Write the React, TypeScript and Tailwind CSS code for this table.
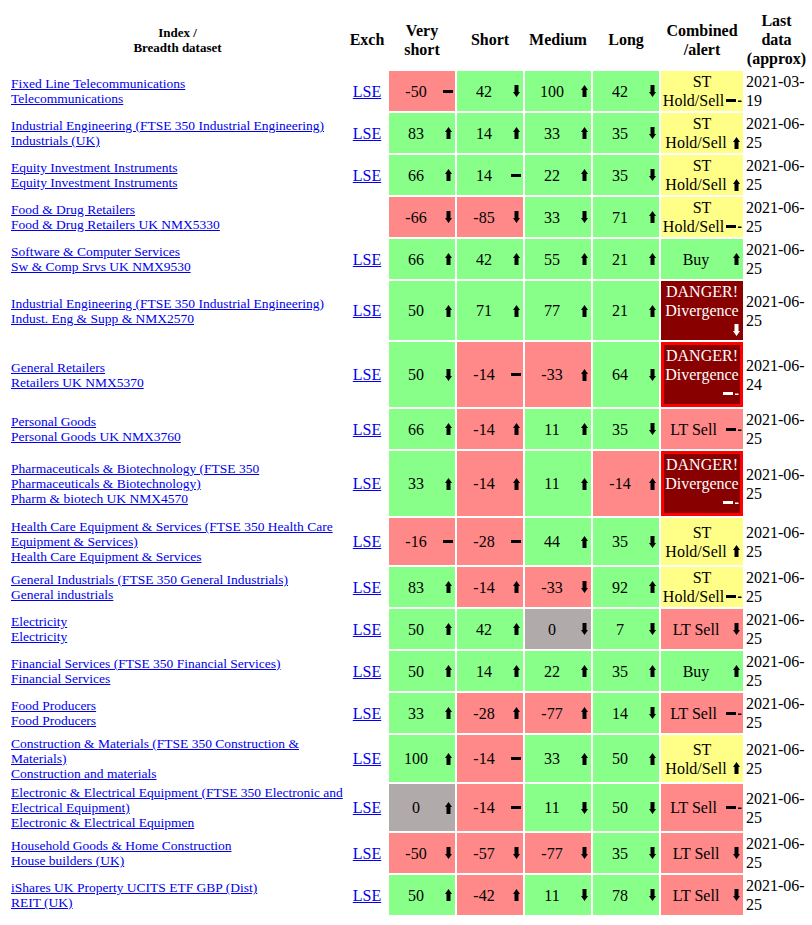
type Dir = "up" | "down" | "flat";
type Alert = "hold" | "buy" | "ltsell" | "danger" | "dangerBox";

type Row = {
  name: string;
  data: string;
  exch: boolean;
  vals: [number, Dir][];
  alert: Alert;
  dir: Dir;
  date: [string, string];
};

const rows: Row[] = [
  { name: "Fixed Line Telecommunications", data: "Telecommunications", exch: true, vals: [[-50, "flat"], [42, "down"], [100, "up"], [42, "down"]], alert: "hold", dir: "flat", date: ["2021-03-", "19"] },
  { name: "Industrial Engineering (FTSE 350 Industrial Engineering)", data: "Industrials (UK)", exch: true, vals: [[83, "up"], [14, "up"], [33, "up"], [35, "down"]], alert: "hold", dir: "up", date: ["2021-06-", "25"] },
  { name: "Equity Investment Instruments", data: "Equity Investment Instruments", exch: true, vals: [[66, "up"], [14, "flat"], [22, "up"], [35, "down"]], alert: "hold", dir: "up", date: ["2021-06-", "25"] },
  { name: "Food & Drug Retailers", data: "Food & Drug Retailers UK NMX5330", exch: false, vals: [[-66, "down"], [-85, "down"], [33, "down"], [71, "up"]], alert: "hold", dir: "flat", date: ["2021-06-", "25"] },
  { name: "Software & Computer Services", data: "Sw & Comp Srvs UK NMX9530", exch: true, vals: [[66, "up"], [42, "up"], [55, "up"], [21, "up"]], alert: "buy", dir: "up", date: ["2021-06-", "25"] },
  { name: "Industrial Engineering (FTSE 350 Industrial Engineering)", data: "Indust. Eng & Supp & NMX2570", exch: true, vals: [[50, "up"], [71, "up"], [77, "up"], [21, "up"]], alert: "danger", dir: "down", date: ["2021-06-", "25"] },
  { name: "General Retailers", data: "Retailers UK NMX5370", exch: true, vals: [[50, "down"], [-14, "flat"], [-33, "up"], [64, "down"]], alert: "dangerBox", dir: "flat", date: ["2021-06-", "24"] },
  { name: "Personal Goods", data: "Personal Goods UK NMX3760", exch: true, vals: [[66, "up"], [-14, "up"], [11, "up"], [35, "down"]], alert: "ltsell", dir: "flat", date: ["2021-06-", "25"] },
  { name: "Pharmaceuticals & Biotechnology (FTSE 350 Pharmaceuticals & Biotechnology)", data: "Pharm & biotech UK NMX4570", exch: true, vals: [[33, "up"], [-14, "up"], [11, "up"], [-14, "up"]], alert: "dangerBox", dir: "flat", date: ["2021-06-", "25"] },
  { name: "Health Care Equipment & Services (FTSE 350 Health Care Equipment & Services)", data: "Health Care Equipment & Services", exch: true, vals: [[-16, "flat"], [-28, "flat"], [44, "up"], [35, "down"]], alert: "hold", dir: "up", date: ["2021-06-", "25"] },
  { name: "General Industrials (FTSE 350 General Industrials)", data: "General industrials", exch: true, vals: [[83, "up"], [-14, "up"], [-33, "down"], [92, "up"]], alert: "hold", dir: "flat", date: ["2021-06-", "25"] },
  { name: "Electricity", data: "Electricity", exch: true, vals: [[50, "up"], [42, "up"], [0, "down"], [7, "down"]], alert: "ltsell", dir: "down", date: ["2021-06-", "25"] },
  { name: "Financial Services (FTSE 350 Financial Services)", data: "Financial Services", exch: true, vals: [[50, "up"], [14, "up"], [22, "up"], [35, "up"]], alert: "buy", dir: "up", date: ["2021-06-", "25"] },
  { name: "Food Producers", data: "Food Producers", exch: true, vals: [[33, "up"], [-28, "up"], [-77, "up"], [14, "down"]], alert: "ltsell", dir: "flat", date: ["2021-06-", "25"] },
  { name: "Construction & Materials (FTSE 350 Construction & Materials)", data: "Construction and materials", exch: true, vals: [[100, "up"], [-14, "flat"], [33, "up"], [50, "up"]], alert: "hold", dir: "up", date: ["2021-06-", "25"] },
  { name: "Electronic & Electrical Equipment (FTSE 350 Electronic and Electrical Equipment)", data: "Electronic & Electrical Equipmen", exch: true, vals: [[0, "up"], [-14, "flat"], [11, "down"], [50, "down"]], alert: "ltsell", dir: "flat", date: ["2021-06-", "25"] },
  { name: "Household Goods & Home Construction", data: "House builders (UK)", exch: true, vals: [[-50, "down"], [-57, "down"], [-77, "down"], [35, "down"]], alert: "ltsell", dir: "down", date: ["2021-06-", "25"] },
  { name: "iShares UK Property UCITS ETF GBP (Dist)", data: "REIT (UK)", exch: true, vals: [[50, "up"], [-42, "up"], [11, "down"], [78, "down"]], alert: "ltsell", dir: "down", date: ["2021-06-", "25"] },
];

function Arrow({ dir, color = "#000", tail = false }: { dir: Dir; color?: string; tail?: boolean }) {
  if (dir === "up")
    return (
      <svg width="7" height="12" viewBox="0 0 7 12">
        <path d="M3.5 0L7 5H5.5V12H1.5V5H0Z" fill={color} />
      </svg>
    );
  if (dir === "down")
    return (
      <svg width="7" height="12" viewBox="0 0 7 12">
        <path d="M3.5 12L7 7H5.5V0H1.5V7H0Z" fill={color} />
      </svg>
    );
  return (
    <svg width={tail ? 16 : 10} height="5" viewBox={tail ? "0 0 16 5" : "0 0 10 5"}>
      <rect x="0" y="1" width="10" height="3" fill={color} />
      {tail && <rect x="12" y="2.5" width="3.5" height="1.5" fill={color} />}
    </svg>
  );
}

function numBg(v: number) {
  if (v > 0) return "bg-[#88ff88]";
  if (v < 0) return "bg-[#ff8888]";
  return "bg-[#b0aaaa]";
}

function NumCell({ v, dir }: { v: number; dir: Dir }) {
  return (
    <td className={`${numBg(v)} p-px text-center text-[16px]`}>
      <span className="float-right flex h-[19px] w-3 items-center justify-center">
        <Arrow dir={dir} />
      </span>
      {v}
    </td>
  );
}

function AlertCell({ alert, dir }: { alert: Alert; dir: Dir }) {
  const danger = alert === "danger" || alert === "dangerBox";
  const color = danger ? "#ffffff" : "#000";
  const floatArrow = (
    <span className={`float-right flex h-[19px] items-center justify-center ${dir === "flat" ? "w-[17px]" : "w-3"}`}>
      <Arrow dir={dir} color={color} tail={dir === "flat"} />
    </span>
  );
  const bg =
    alert === "hold"
      ? "bg-[#ffff88]"
      : alert === "buy"
        ? "bg-[#88ff88]"
        : alert === "ltsell"
          ? "bg-[#ff8888]"
          : "bg-[#880000] text-white";
  return (
    <td className={`${bg} p-px text-center text-[16px] ${alert === "dangerBox" ? "border-[3px] border-[#ff0000]" : ""}`}>
      {alert === "hold" && <>ST Hold/Sell{floatArrow}</>}
      {alert === "buy" && <>Buy{floatArrow}</>}
      {alert === "ltsell" && <>LT Sell{floatArrow}</>}
      {danger && <>DANGER! Divergence{floatArrow}</>}
    </td>
  );
}

export default function App() {
  return (
    <div className="bg-white p-2 font-['Liberation_Serif','Times_New_Roman',serif] leading-[19px] text-black">
      <table className="w-[802px] border-separate border-spacing-[2px]">
        <thead>
          <tr>
            <th className="p-px text-center text-[13px] leading-[15px] font-bold">
              Index /<br />
              Breadth dataset
            </th>
            <th className="w-[40px] p-px text-center text-[16px] font-bold">Exch</th>
            <th className="w-[66px] p-px text-center text-[16px] font-bold">
              Very
              <br />
              short
            </th>
            <th className="w-[66px] p-px text-center text-[16px] font-bold">Short</th>
            <th className="w-[66px] p-px text-center text-[16px] font-bold">Medium</th>
            <th className="w-[66px] p-px text-center text-[16px] font-bold">Long</th>
            <th className="w-[82px] p-px text-center text-[16px] font-bold">
              Combined
              <br />
              /alert
            </th>
            <th className="w-[63px] p-px text-center text-[16px] font-bold">
              Last
              <br />
              data
              <br />
              (approx)
            </th>
          </tr>
        </thead>
        <tbody>
          {rows.map((r, i) => (
            <tr key={i}>
              <td className="p-px text-left text-[13.5px] leading-[15px]">
                <a href="#" className="text-[#0000ee] underline">
                  {r.name}
                </a>
                <br />
                <a href="#" className="text-[#0000ee] underline">
                  {r.data}
                </a>
              </td>
              <td className="p-px text-center text-[16px]">
                {r.exch && (
                  <a href="#" className="text-[#0000ee] underline">
                    LSE
                  </a>
                )}
              </td>
              {r.vals.map(([v, d], j) => (
                <NumCell key={j} v={v} dir={d} />
              ))}
              <AlertCell alert={r.alert} dir={r.dir} />
              <td className="p-px text-left text-[16px]">
                {r.date[0]}
                <br />
                {r.date[1]}
              </td>
            </tr>
          ))}
        </tbody>
      </table>
    </div>
  );
}
